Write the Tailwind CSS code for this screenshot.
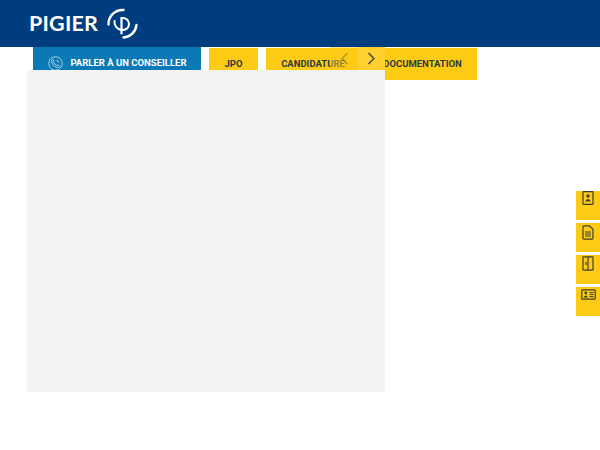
<!DOCTYPE html>
<html lang="fr">
<head>
    <meta charset="UTF-8">
    <meta name="viewport" content="width=device-width, initial-scale=1.0">
    <title>Pigier</title>
    <script src="https://cdn.jsdelivr.net/npm/@tailwindcss/browser@4"></script>
</head>
<body class="bg-white font-['Roboto',sans-serif]">
    <div class="relative w-[600px] h-[450px] overflow-hidden">
        <!-- header -->
        <header class="h-[47px] bg-[#003d7e] flex items-center pl-[29px]">
            <span class="font-['Lato',sans-serif] font-bold text-[21.5px] leading-none tracking-[0.2px] text-white">PIGIER</span>
            <svg class="ml-[8px]" width="33" height="33" viewBox="0 0 33 33" fill="none" stroke="#fff" stroke-linecap="round">
                <path d="M2.5 17.5 A14 14 0 0 1 17.5 3" stroke-width="2.4"/>
                <path d="M30.5 18 A14 14 0 0 1 17.5 30.5" stroke-width="2.4"/>
                <path d="M8.5 14 A8 8 0 0 0 15.5 23" stroke-width="2"/>
                <path d="M15.5 11 H17 A6 6 0 0 1 17 23 H15.5" stroke-width="2"/>
                <path d="M15.5 11 V26.5" stroke-width="2.2"/>
            </svg>
        </header>

        <!-- onglets -->
        <nav class="flex items-start gap-2 pl-[33px] text-[9.5px] font-bold text-[#2b3a42]">
            <a class="w-[168px] h-[33px] flex items-center justify-center gap-[8px] bg-[#0a79b5] text-white">
                <svg width="15" height="15" viewBox="0 0 16 16" fill="none" stroke="#dcebf3" stroke-width="0.8">
                    <circle cx="8" cy="8" r="7.2"/>
                    <path d="M5 3.6 L6.6 5.4 L5.8 6.6 Q6.8 9 9.4 10.2 L10.6 9.4 L12.4 11 Q11.6 12.6 10 12.4 Q4.4 11 3.8 5.2 Q4 4 5 3.6 Z"/>
                    <path d="M9 4.6 Q11.2 5 11.6 7.2"/>
                </svg>
                <span>PARLER À UN CONSEILLER</span>
            </a>
            <a class="w-[49px] h-[32px] mt-px flex items-center justify-center bg-[#fecb14]">JPO</a>
            <a class="w-[94px] h-[32px] mt-px flex items-center justify-center bg-[#fecb14]">CANDIDATURE</a>
            <a class="w-[109px] h-[32px] mt-px flex items-center justify-center bg-[#fecb14]">DOCUMENTATION</a>
        </nav>

        <!-- panneau et fleches -->
        <div class="absolute left-[27px] top-[70px] w-[358px] h-[322px] bg-[#f3f3f3]"></div>
        <div class="absolute left-[330px] top-[47px] w-[55px] h-[23px] flex">
            <button class="w-[28px] flex items-center justify-center bg-[#fecb14]/50">
                <svg width="9" height="13" viewBox="0 0 9 13" fill="none" stroke="#2b3a42" stroke-opacity="0.4" stroke-width="1.2"><path d="M7.5 1 L2 6.5 L7.5 12"/></svg>
            </button>
            <button class="w-[27px] flex items-center justify-center bg-[#ffd02e]">
                <svg width="9" height="13" viewBox="0 0 9 13" fill="none" stroke="#2b3a42" stroke-width="1.2"><path d="M1.5 1 L7 6.5 L1.5 12"/></svg>
            </button>
        </div>

        <!-- boutons lateraux -->
        <aside class="absolute right-0 top-[191px] w-[24px] flex flex-col gap-[3px]">
            <a class="h-[29px] bg-[#fecb14] flex justify-center">
                <svg width="12" height="14" viewBox="0 0 12 14" fill="none" stroke="#3a3f2e" stroke-width="1.2">
                    <rect x="1" y="0.6" width="10" height="12.8" rx="0.6"/>
                    <circle cx="6" cy="5" r="1.7" fill="#3a3f2e" stroke="none"/>
                    <path d="M3.2 10.4 Q6 5.8 8.8 10.4 Z" fill="#3a3f2e" stroke="none"/>
                </svg>
            </a>
            <a class="h-[29px] bg-[#fecb14] flex justify-center pt-[2px]">
                <svg width="12" height="15" viewBox="0 0 12 15" fill="none" stroke="#3a3f2e" stroke-width="1.2">
                    <path d="M1 1.7 Q1 0.8 2 0.8 H7.5 L11 4.3 V13.2 Q11 14.2 10 14.2 H2 Q1 14.2 1 13.2 Z"/>
                    <path d="M3 7 H9 M3 9 H9 M3 11 H9" stroke-width="1"/>
                </svg>
            </a>
            <a class="h-[29px] bg-[#fecb14] flex justify-center pt-px">
                <svg width="12" height="15" viewBox="0 0 12 15" fill="none" stroke="#3a3f2e" stroke-width="1.2">
                    <rect x="1" y="0.8" width="10" height="13.4" rx="0.8"/>
                    <path d="M6 1 V14 M4 6 V9"/>
                </svg>
            </a>
            <a class="h-[29px] bg-[#fecb14] flex justify-center pt-[2px]">
                <svg width="15" height="11" viewBox="0 0 15 11" fill="none" stroke="#3a3f2e" stroke-width="1.2">
                    <rect x="0.8" y="0.8" width="13.4" height="9.4" rx="0.8"/>
                    <circle cx="4.8" cy="4" r="1.4" fill="#3a3f2e" stroke="none"/>
                    <path d="M2.6 8.4 Q4.8 4.6 7 8.4 Z" fill="#3a3f2e" stroke="none"/>
                    <path d="M8.5 3.6 H12.5 M8.5 5.6 H12.5 M8.5 7.6 H12.5" stroke-width="1"/>
                </svg>
            </a>
        </aside>
    </div>
</body>
</html>
